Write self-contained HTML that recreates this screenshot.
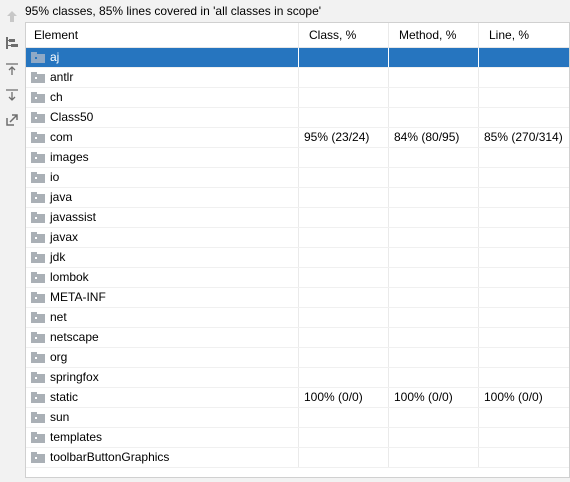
<!DOCTYPE html>
<html><head><style>
body{margin:0;width:570px;height:482px;background:#f2f2f2;font-family:"Liberation Sans",sans-serif;font-size:12px;color:#000;position:relative;overflow:hidden}
.top{position:absolute;left:25px;top:4px;font-size:12px}
.tbl{position:absolute;left:25px;top:22px;width:543px;height:454px;background:#fff;border:1px solid #d0d0d0;border-right:1px solid #d0d0d0}
.hdr{height:24px;border-bottom:1px solid #e6e6e6;position:relative}
.row{height:19px;border-bottom:1px solid #f0f0f0;position:relative}
.c{position:absolute;top:0;height:100%;line-height:19px;white-space:nowrap}
.hdr .c{line-height:24px}
.c1{left:0;width:273px;border-right:1px solid #eaeaea;padding-left:8px;box-sizing:border-box}
.c2{left:274px;width:89px;border-right:1px solid #eaeaea;padding-left:4px;box-sizing:border-box}
.c3{left:364px;width:89px;border-right:1px solid #eaeaea;padding-left:4px;box-sizing:border-box}
.c4{left:454px;width:89px;padding-left:4px;box-sizing:border-box}
.hdr .c2,.hdr .c3,.hdr .c4{padding-left:9px}
.sel{background:#2675bf;color:#fff}
.sel .c{border-right-color:#fff}
.f{display:inline-block;vertical-align:-2px;width:14px;height:11px;position:relative;margin-right:5px;margin-left:-3px}
.f:before{content:"";position:absolute;left:0;top:0;width:6px;height:2px;background:#aab0b6}
.f:after{content:"";position:absolute;left:0;top:2px;width:14px;height:9px;background:#aab0b6}
.f i{position:absolute;left:4px;top:5px;width:2px;height:2px;background:#fff;z-index:1}
.sel .f:before,.sel .f:after{background:#8fa9c6}
.sel .f i{background:#2675bf}
.ic{position:absolute;left:5px;width:14px;height:14px}
</style></head><body>
<div class="top">95% classes, 85% lines covered in 'all classes in scope'</div>
<svg class="ic" style="top:10px" viewBox="0 0 14 14"><path d="M7 1L2 6h3v6h4V6h3z" fill="#c8c8c8"/></svg>
<svg class="ic" style="top:36px" viewBox="0 0 14 14" fill="#6e6e6e"><rect x="1" y="1" width="2" height="12"/><rect x="4" y="3" width="6" height="3"/><rect x="6" y="8" width="7" height="3"/><rect x="3" y="4" width="1" height="1"/><rect x="3" y="9" width="3" height="1"/></svg>
<svg class="ic" style="top:62px" viewBox="0 0 14 14" fill="none" stroke="#6e6e6e" stroke-width="1.3"><path d="M1 2h12M7 13V5M4 8l3-3 3 3"/></svg>
<svg class="ic" style="top:88px" viewBox="0 0 14 14" fill="none" stroke="#6e6e6e" stroke-width="1.3"><path d="M1 2h12M7 4v8M4 9l3 3 3-3"/></svg>
<svg class="ic" style="top:113px" viewBox="0 0 14 14" fill="none" stroke="#6e6e6e" stroke-width="1.5"><path d="M2 5v7h7M5 9l7-7M7 2h5v5"/></svg>
<div class="tbl">
<div class="hdr"><div class="c c1">Element</div><div class="c c2">Class, %</div><div class="c c3">Method, %</div><div class="c c4">Line, %</div></div>
<div class="row sel"><div class="c c1"><span class="f"><i></i></span>aj</div><div class="c c2"></div><div class="c c3"></div><div class="c c4"></div></div>
<div class="row"><div class="c c1"><span class="f"><i></i></span>antlr</div><div class="c c2"></div><div class="c c3"></div><div class="c c4"></div></div>
<div class="row"><div class="c c1"><span class="f"><i></i></span>ch</div><div class="c c2"></div><div class="c c3"></div><div class="c c4"></div></div>
<div class="row"><div class="c c1"><span class="f"><i></i></span>Class50</div><div class="c c2"></div><div class="c c3"></div><div class="c c4"></div></div>
<div class="row"><div class="c c1"><span class="f"><i></i></span>com</div><div class="c c2">95% (23/24)</div><div class="c c3">84% (80/95)</div><div class="c c4">85% (270/314)</div></div>
<div class="row"><div class="c c1"><span class="f"><i></i></span>images</div><div class="c c2"></div><div class="c c3"></div><div class="c c4"></div></div>
<div class="row"><div class="c c1"><span class="f"><i></i></span>io</div><div class="c c2"></div><div class="c c3"></div><div class="c c4"></div></div>
<div class="row"><div class="c c1"><span class="f"><i></i></span>java</div><div class="c c2"></div><div class="c c3"></div><div class="c c4"></div></div>
<div class="row"><div class="c c1"><span class="f"><i></i></span>javassist</div><div class="c c2"></div><div class="c c3"></div><div class="c c4"></div></div>
<div class="row"><div class="c c1"><span class="f"><i></i></span>javax</div><div class="c c2"></div><div class="c c3"></div><div class="c c4"></div></div>
<div class="row"><div class="c c1"><span class="f"><i></i></span>jdk</div><div class="c c2"></div><div class="c c3"></div><div class="c c4"></div></div>
<div class="row"><div class="c c1"><span class="f"><i></i></span>lombok</div><div class="c c2"></div><div class="c c3"></div><div class="c c4"></div></div>
<div class="row"><div class="c c1"><span class="f"><i></i></span>META-INF</div><div class="c c2"></div><div class="c c3"></div><div class="c c4"></div></div>
<div class="row"><div class="c c1"><span class="f"><i></i></span>net</div><div class="c c2"></div><div class="c c3"></div><div class="c c4"></div></div>
<div class="row"><div class="c c1"><span class="f"><i></i></span>netscape</div><div class="c c2"></div><div class="c c3"></div><div class="c c4"></div></div>
<div class="row"><div class="c c1"><span class="f"><i></i></span>org</div><div class="c c2"></div><div class="c c3"></div><div class="c c4"></div></div>
<div class="row"><div class="c c1"><span class="f"><i></i></span>springfox</div><div class="c c2"></div><div class="c c3"></div><div class="c c4"></div></div>
<div class="row"><div class="c c1"><span class="f"><i></i></span>static</div><div class="c c2">100% (0/0)</div><div class="c c3">100% (0/0)</div><div class="c c4">100% (0/0)</div></div>
<div class="row"><div class="c c1"><span class="f"><i></i></span>sun</div><div class="c c2"></div><div class="c c3"></div><div class="c c4"></div></div>
<div class="row"><div class="c c1"><span class="f"><i></i></span>templates</div><div class="c c2"></div><div class="c c3"></div><div class="c c4"></div></div>
<div class="row"><div class="c c1"><span class="f"><i></i></span>toolbarButtonGraphics</div><div class="c c2"></div><div class="c c3"></div><div class="c c4"></div></div>
</div>
</body></html>
